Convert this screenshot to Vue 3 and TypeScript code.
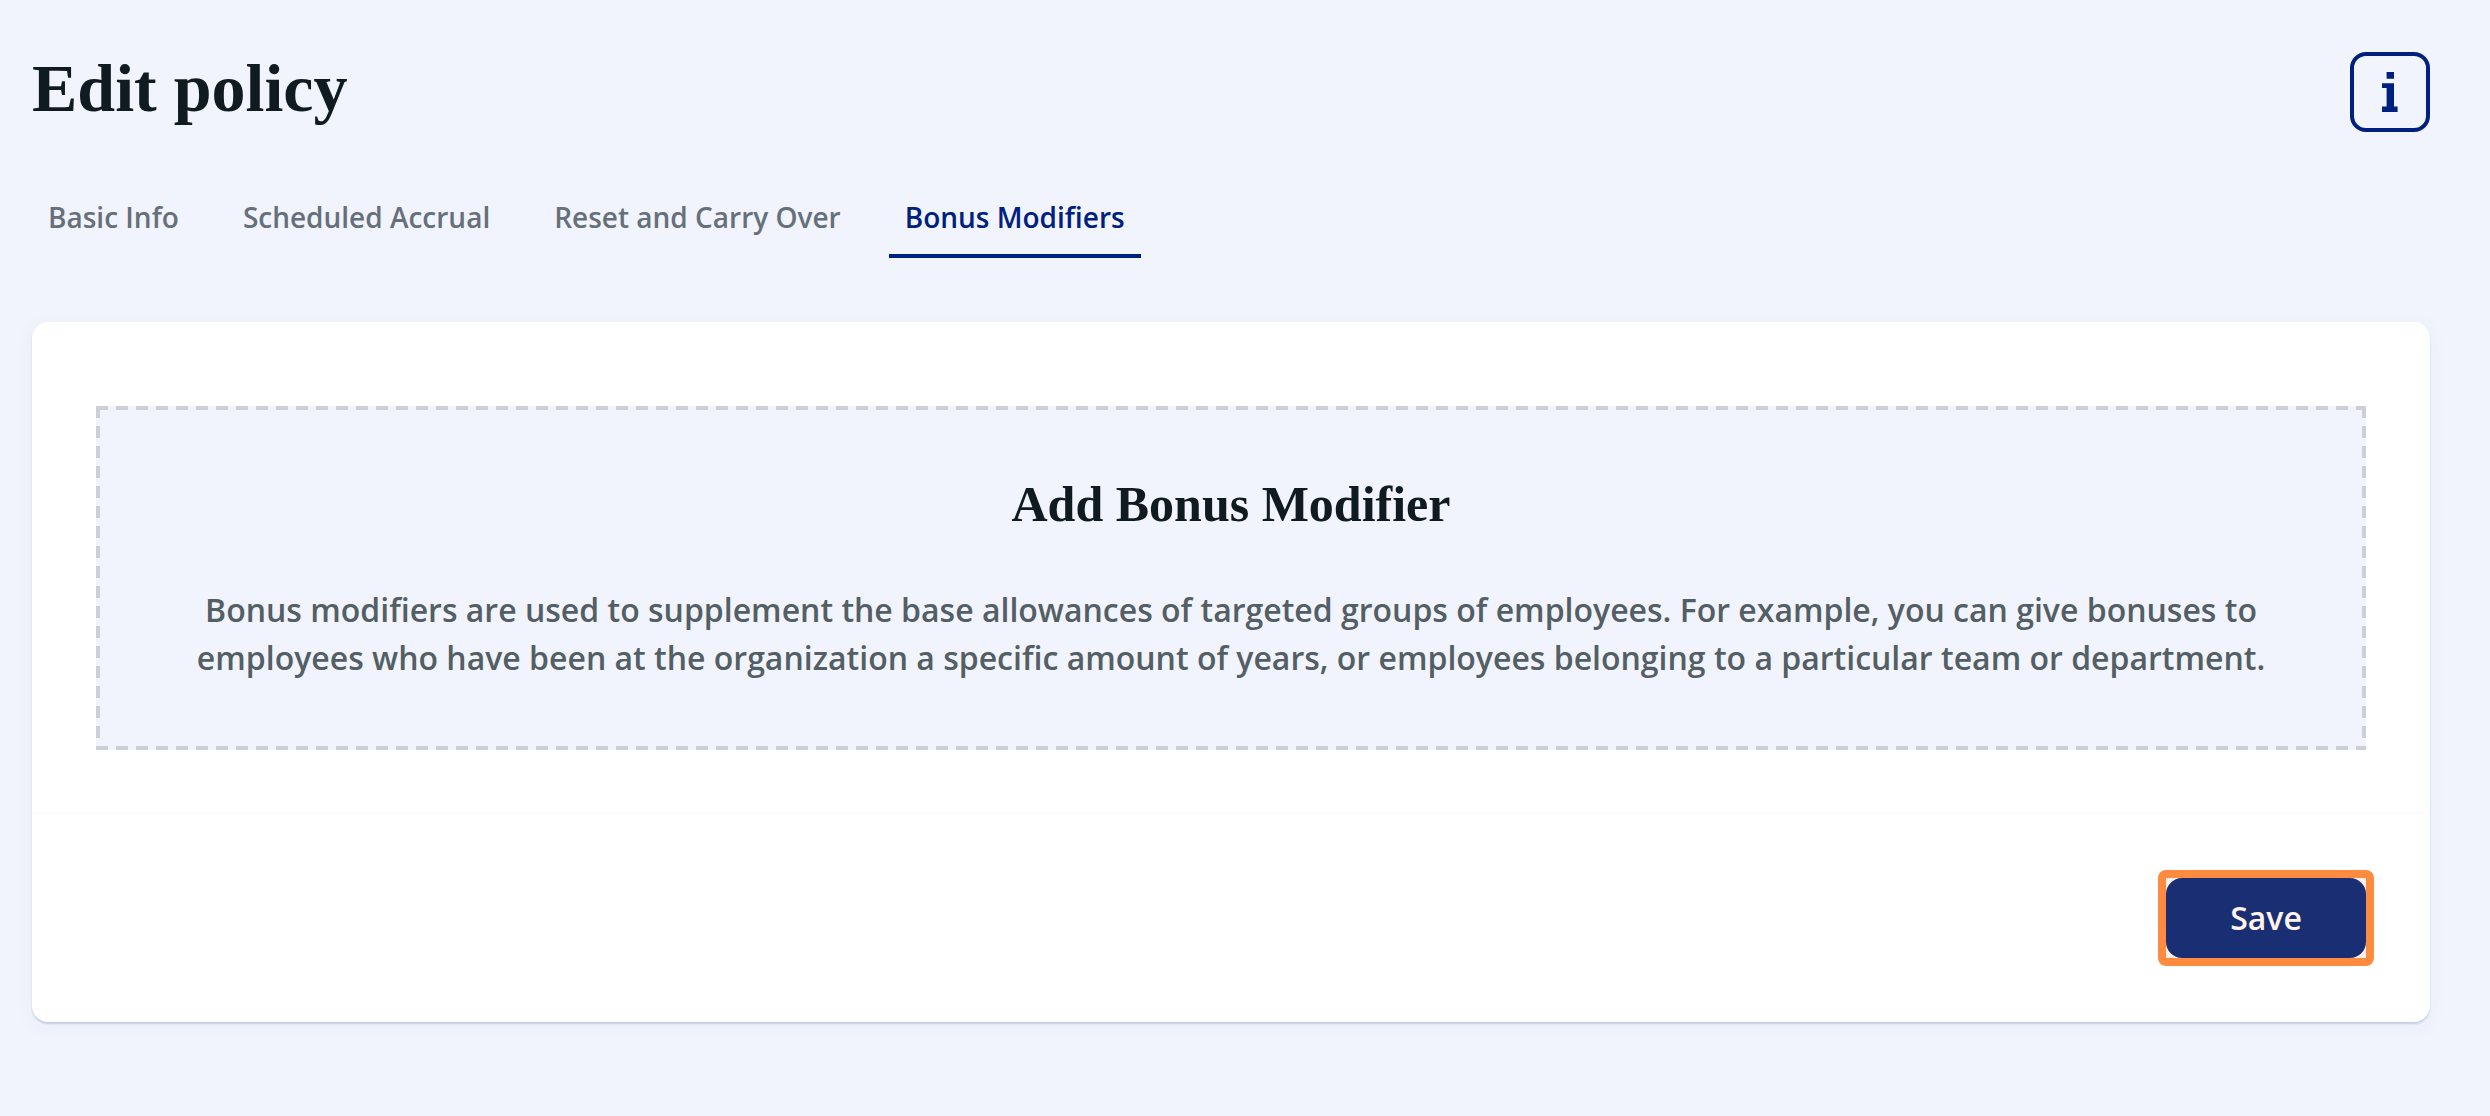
<script setup lang="ts">
import { ref } from 'vue'

const tabs: string[] = ['Basic Info', 'Scheduled Accrual', 'Reset and Carry Over', 'Bonus Modifiers']
const active = ref<string>('Bonus Modifiers')
</script>

<template>
  <main class="page">
    <header class="header">
      <h1 class="title">Edit policy</h1>
      <button class="info" type="button" aria-label="Policy information">
        <svg viewBox="0 0 16 40" width="16" height="40" aria-hidden="true">
          <path d="M4.6 0H12v6.8H4.6zM0 11.2h12v23.4h3.6V40H0v-5.4h4.6V16H0z" />
        </svg>
      </button>
    </header>

    <nav class="tabs" aria-label="Policy sections">
      <a
        v-for="tab in tabs"
        :key="tab"
        href="#"
        class="tab"
        :class="{ active: tab === active }"
        :aria-current="tab === active ? 'page' : undefined"
        @click.prevent="active = tab"
      >{{ tab }}</a>
    </nav>

    <section class="card">
      <div class="content">
        <div class="dropzone">
          <h2 class="subtitle">Add Bonus Modifier</h2>
          <p class="description">
            Bonus modifiers are used to supplement the base allowances of targeted groups of employees. For
            example, you can give bonuses to employees who have been at the organization a specific amount of
            years, or employees belonging to a particular team or department.
          </p>
        </div>
      </div>
      <footer class="footer">
        <div class="highlight">
          <button class="save" type="button">Save</button>
        </div>
      </footer>
    </section>
  </main>
</template>

<style>
body {
  margin: 0;
  background: #f1f4fc;
}
</style>

<style scoped>
.page {
  box-sizing: border-box;
  padding: 52px 60px 80px 32px;
  font-family: "Open Sans", "Noto Sans", sans-serif;
  font-weight: 600;
}

.header {
  display: flex;
  justify-content: space-between;
  align-items: flex-start;
}

.title,
.subtitle {
  margin: 0;
  font-family: "Source Serif Pro", "Liberation Serif", serif;
  font-weight: 700;
  color: #101b21;
}

.title {
  font-size: 68px;
  line-height: 72px;
}

.info {
  display: flex;
  align-items: center;
  justify-content: center;
  width: 80px;
  height: 80px;
  padding: 0;
  border: 4px solid #002080;
  border-radius: 16px;
  background: transparent;
  color: #002080;
}

.info svg {
  fill: currentColor;
}

.tabs {
  display: flex;
  gap: 32px;
  margin-top: 48px;
}

.tab {
  padding: 16px;
  border-bottom: 4px solid transparent;
  font-size: 28px;
  line-height: 42px;
  white-space: nowrap;
  color: #66707a;
  text-decoration: none;
}

.tab.active {
  border-bottom-color: #002080;
  color: #002080;
}

.card {
  margin-top: 64px;
  border-radius: 16px;
  background: #fff;
  box-shadow: 0 2px 2px #c4cde4, 0 4px 24px rgba(40, 70, 130, 0.04);
}

.content {
  padding: 84px 64px 64px;
  background: linear-gradient(to top, #fcfcfc, rgba(255, 255, 255, 0) 8px);
  border-radius: 16px 16px 0 0;
}

/* Long dashes: 12px on, 8px off, along each side */
.dropzone {
  --row: linear-gradient(to right, #cccfd9 12px, transparent 12px);
  --column: linear-gradient(to bottom, #cccfd9 12px, transparent 12px);
  padding: 64px 64px 68px;
  background:
    var(--row) left top / 20px 4px repeat-x,
    var(--row) left bottom / 20px 4px repeat-x,
    var(--column) left top / 4px 20px repeat-y,
    var(--column) right top / 4px 20px repeat-y,
    #f1f4fc;
  text-align: center;
}

.subtitle {
  font-size: 50px;
  line-height: 68px;
}

.description {
  margin: 48px 0 0;
  font-size: 32px;
  line-height: 48px;
  color: #535f65;
}

.footer {
  display: flex;
  justify-content: flex-end;
  padding: 56px;
}

.highlight {
  display: flex;
  border: 8px solid #ff8b41;
  border-radius: 8px;
  background: #fff1e9;
}

.save {
  width: 200px;
  height: 80px;
  padding: 0;
  border: 0;
  border-radius: 16px;
  background: #1a2f73;
  color: #fff3ea;
  font-family: inherit;
  font-size: 32px;
  font-weight: 600;
  line-height: 48px;
}
</style>
